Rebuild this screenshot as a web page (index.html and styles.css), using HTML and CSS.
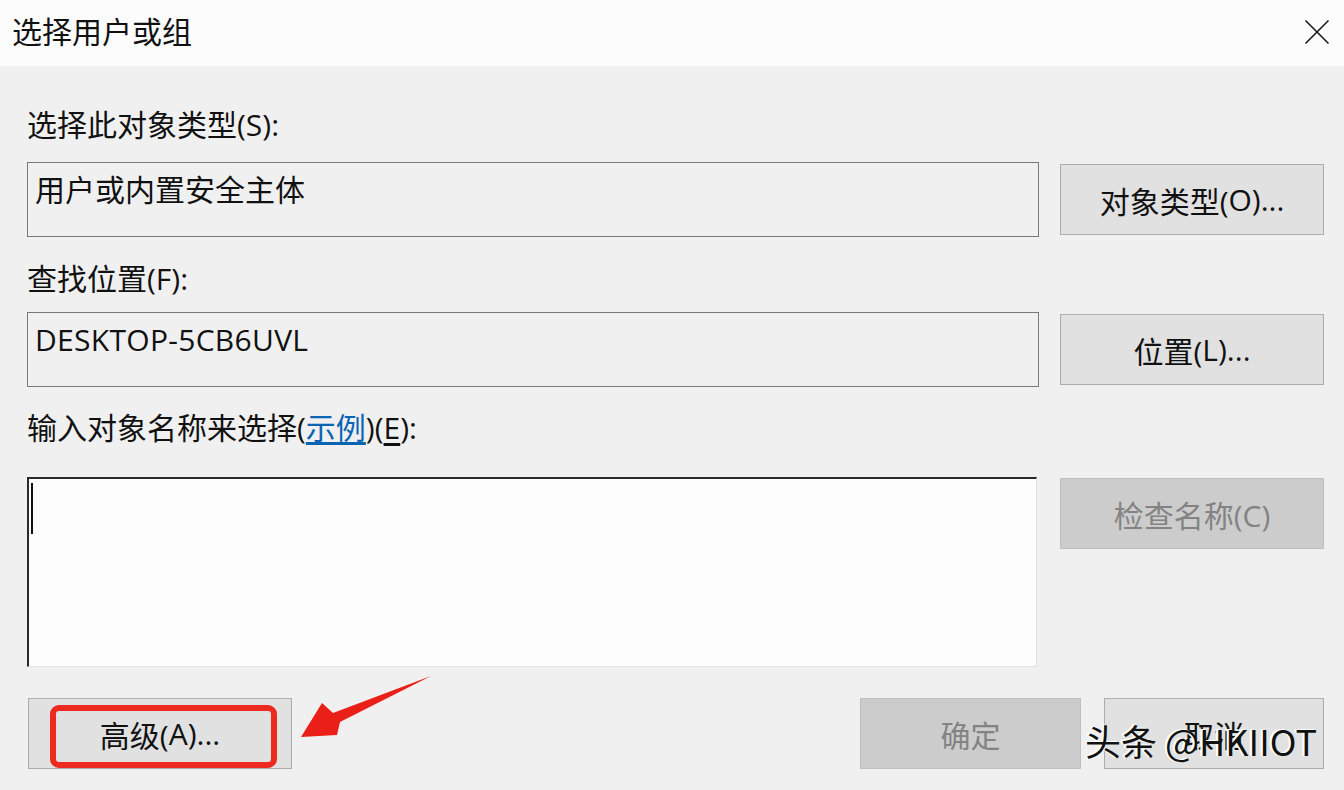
FILE: index.html
```html
<!DOCTYPE html>
<html lang="zh-CN">
<head>
<meta charset="utf-8">
<title>选择用户或组</title>
<link rel="stylesheet" href="styles.css">
</head>
<body>
<div class="dialog">
  <div class="titlebar">
    <span class="title">选择用户或组</span>
    <svg class="close" width="26" height="26" viewBox="0 0 26 26"><path d="M1.5 1.5 L24.5 24.5 M24.5 1.5 L1.5 24.5" stroke="#1a1a1a" stroke-width="1.6" fill="none"/></svg>
  </div>
  <div class="content">
    <div class="label lbl1">选择此对象类型(<u>S</u>):</div>
    <div class="row row1">
      <div class="field">用户或内置安全主体</div>
      <div class="btn">对象类型(<u>O</u>)...</div>
    </div>
    <div class="label lbl2">查找位置(<u>F</u>):</div>
    <div class="row row2">
      <div class="field latin">DESKTOP-5CB6UVL</div>
      <div class="btn">位置(<u>L</u>)...</div>
    </div>
    <div class="label lbl3">输入对象名称来选择(<a class="link">示例</a>)(<u>E</u>):</div>
    <div class="row row3">
      <div class="textarea"><span class="caret"></span></div>
      <div class="btn disabled">检查名称(C)</div>
    </div>
    <div class="bottom">
      <div class="btn advanced">高级(<u>A</u>)...<span class="highlight"></span></div>
      <div class="spacer"></div>
      <div class="btn disabled ok">确定</div>
      <div class="btn cancel">取消</div>
    </div>
  </div>
  <svg class="arrow" width="140" height="75" viewBox="0 0 140 75">
    <polygon points="1,62 22,28 33,38 131,1 40,47 37,60" fill="#ea1f18"/>
  </svg>
  <div class="watermark">头条 @HKIIOT</div>
</div>
</body>
</html>
```
FILE: styles.css
```css
html, body {
  margin: 0;
  padding: 0;
}
body {
  background: #f0f0f0;
  font-family: "Open Sans", "Noto Sans CJK SC", sans-serif;
  color: #111;
  font-size: 30px;
}
.dialog {
  position: relative;
  width: 1344px;
  height: 790px;
  overflow: hidden;
}
.titlebar {
  height: 66px;
  background: #fcfcfc;
  display: flex;
  align-items: center;
  justify-content: space-between;
  padding: 0 14px 6px 12px;
  box-sizing: border-box;
}
.title {
  font-size: 30px;
  font-family: "Noto Sans CJK SC", sans-serif;
}
.close {
  display: block;
  margin-top: 4px;
}
.content {
  padding: 39px 20px 0 27px;
  display: flex;
  flex-direction: column;
}
.label {
  height: 40px;
  line-height: 40px;
  white-space: nowrap;
}
.label u, .btn u {
  text-decoration: none;
}
.lbl2 { margin-top: 22px; }
.lbl3 { margin-top: 21px; }
.link {
  color: #0a64b4;
  text-decoration: underline;
  text-underline-offset: 3px;
}
.lbl3 u {
  text-decoration: underline;
  text-underline-offset: 4px;
}
.row {
  display: grid;
  grid-template-columns: 1012px 264px;
  column-gap: 21px;
  align-items: start;
}
.row1 { margin-top: 17px; }
.row2 { margin-top: 13px; }
.row3 { margin-top: 29px; }
.field {
  height: 75px;
  box-sizing: border-box;
  border: 1px solid #7a7a7a;
  padding: 7px 7px 0;
  line-height: 40px;
  background: #f0f0f0;
  white-space: nowrap;
}
.field.latin {
  letter-spacing: 0.3px;
}
.btn {
  height: 71px;
  box-sizing: border-box;
  border: 1px solid #adadad;
  background: #e1e1e1;
  display: flex;
  align-items: center;
  justify-content: center;
  white-space: nowrap;
  margin-top: 2px;
}
.row3 .btn { margin-top: 1px; }
.btn.disabled {
  background: #cccccc;
  border-color: #bfbfbf;
  color: #838383;
}
.textarea {
  height: 190px;
  box-sizing: border-box;
  background: #fdfdfd;
  border-top: 2px solid #2a2a2a;
  border-left: 2px solid #2a2a2a;
  border-right: 1px solid #e2e2e2;
  border-bottom: 1px solid #e2e2e2;
  padding: 4px 0 0 2px;
  width: 1010px;
}
.caret {
  display: block;
  width: 2px;
  height: 51px;
  background: #111;
}
.bottom {
  margin-top: 31px;
  display: flex;
  gap: 23px;
  padding-left: 1px;
}
.bottom .btn { margin-top: 0; }
.advanced {
  width: 264px;
  position: relative;
}
.spacer { flex: 1; }
.ok { width: 221px; }
.cancel { width: 220px; }
.highlight {
  position: absolute;
  left: 21px;
  top: 6px;
  width: 227px;
  height: 63px;
  box-sizing: border-box;
  border: 6px solid #ec2a20;
  border-radius: 9px;
}
.arrow {
  position: absolute;
  left: 300px;
  top: 675px;
}
.watermark {
  position: absolute;
  left: 1085px;
  top: 718px;
  font-family: "Noto Sans CJK SC", sans-serif;
  font-size: 36px;
  line-height: 44px;
  color: #111;
  text-shadow: -2px 0 0 #fff, -2px -1px 0 #fff;
  white-space: nowrap;
}
```
